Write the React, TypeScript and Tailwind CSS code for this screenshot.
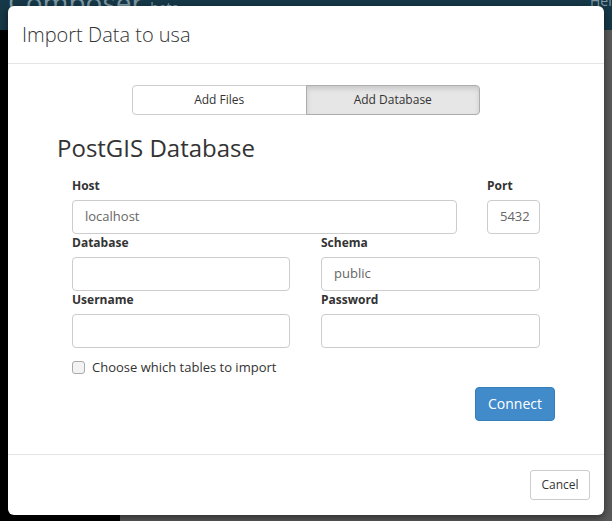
import React from "react";

const font = { fontFamily: '"Open Sans", "Liberation Sans", sans-serif' };

const Field = ({ label, value, className }: { label: string; value?: string; className?: string }) => (
  <div className={className}>
    <div className="h-[18px] text-[12px] font-bold leading-[18px] text-[#333]">{label}</div>
    <div className="mt-[5px] flex h-[34px] items-center overflow-hidden rounded-[4px] border border-[#ccc] bg-white px-[12px] text-[13px] text-[#666]">
      {value}
    </div>
  </div>
);

const Backdrop = () => (
  <div className="absolute inset-0 flex flex-col">
    <div className="relative h-[30px] bg-[#163847]">
      <span className="absolute left-[8px] top-[-19px] whitespace-nowrap text-[28px] text-[#7f98a3]">
        Composer <span className="text-[14px]">beta</span>
      </span>
      <span className="absolute left-[590px] top-[-10px] text-[14px] text-[#7f98a3]">Help</span>
    </div>
    <div className="flex flex-1">
      <div className="w-[120px] bg-black" />
      <div className="flex-1 bg-[#5a5a5a]" />
    </div>
  </div>
);

export default function App() {
  return (
    <div className="relative h-[521px] w-[612px] overflow-hidden" style={font}>
      <Backdrop />
      <div className="absolute left-[8px] top-[6px] w-[596px] rounded-[6px] bg-white shadow-[0_3px_9px_rgba(0,0,0,0.5)]">
        <div className="flex h-[58px] items-center border-b border-[#e5e5e5] px-[14px] text-[20px] font-light text-[#333]">
          Import Data to usa
        </div>
        <div className="px-[15px] pt-[21px]">
          <div className="flex justify-center">
            <div className="flex h-[30px] w-[348px] text-[12px] text-[#333]">
              <div className="flex flex-1 items-center justify-center rounded-l-[4px] border border-[#ccc] bg-white">
                Add Files
              </div>
              <div className="-ml-px flex flex-1 items-center justify-center rounded-r-[4px] border border-[#adadad] bg-[#e6e6e6] shadow-[inset_0_3px_5px_rgba(0,0,0,0.125)]">
                Add Database
              </div>
            </div>
          </div>
          <div className="ml-[34px] mt-[18px] text-[24px] leading-[30px] text-[#333]">PostGIS Database</div>
          <div className="ml-[49px] mt-[14px] w-[468px]">
            <div className="flex gap-[30px]">
              <Field label="Host" value="localhost" className="w-[385px]" />
              <Field label="Port" value="5432" className="w-[53px]" />
            </div>
            <div className="flex gap-[31px]">
              <Field label="Database" className="w-[218px]" />
              <Field label="Schema" value="public" className="w-[219px]" />
            </div>
            <div className="flex gap-[31px]">
              <Field label="Username" className="w-[218px]" />
              <Field label="Password" className="w-[219px]" />
            </div>
            <div className="mt-[10px] flex items-center gap-[7px] text-[13px] text-[#333]">
              <span className="h-[13px] w-[13px] rounded-[3px] border border-[#aaa] bg-[#f3f3f3]" />
              Choose which tables to import
            </div>
          </div>
          <div className="mr-[34px] mt-[9px] flex justify-end">
            <button className="h-[34px] w-[80px] rounded-[4px] border border-[#357ebd] bg-[#428bca] text-[14px] text-white">
              Connect
            </button>
          </div>
        </div>
        <div className="mt-[33px] flex h-[61px] items-center justify-end border-t border-[#e5e5e5] px-[14px]">
          <button className="h-[30px] w-[60px] rounded-[3px] border border-[#ccc] bg-white text-[12px] text-[#333]">
            Cancel
          </button>
        </div>
      </div>
    </div>
  );
}
